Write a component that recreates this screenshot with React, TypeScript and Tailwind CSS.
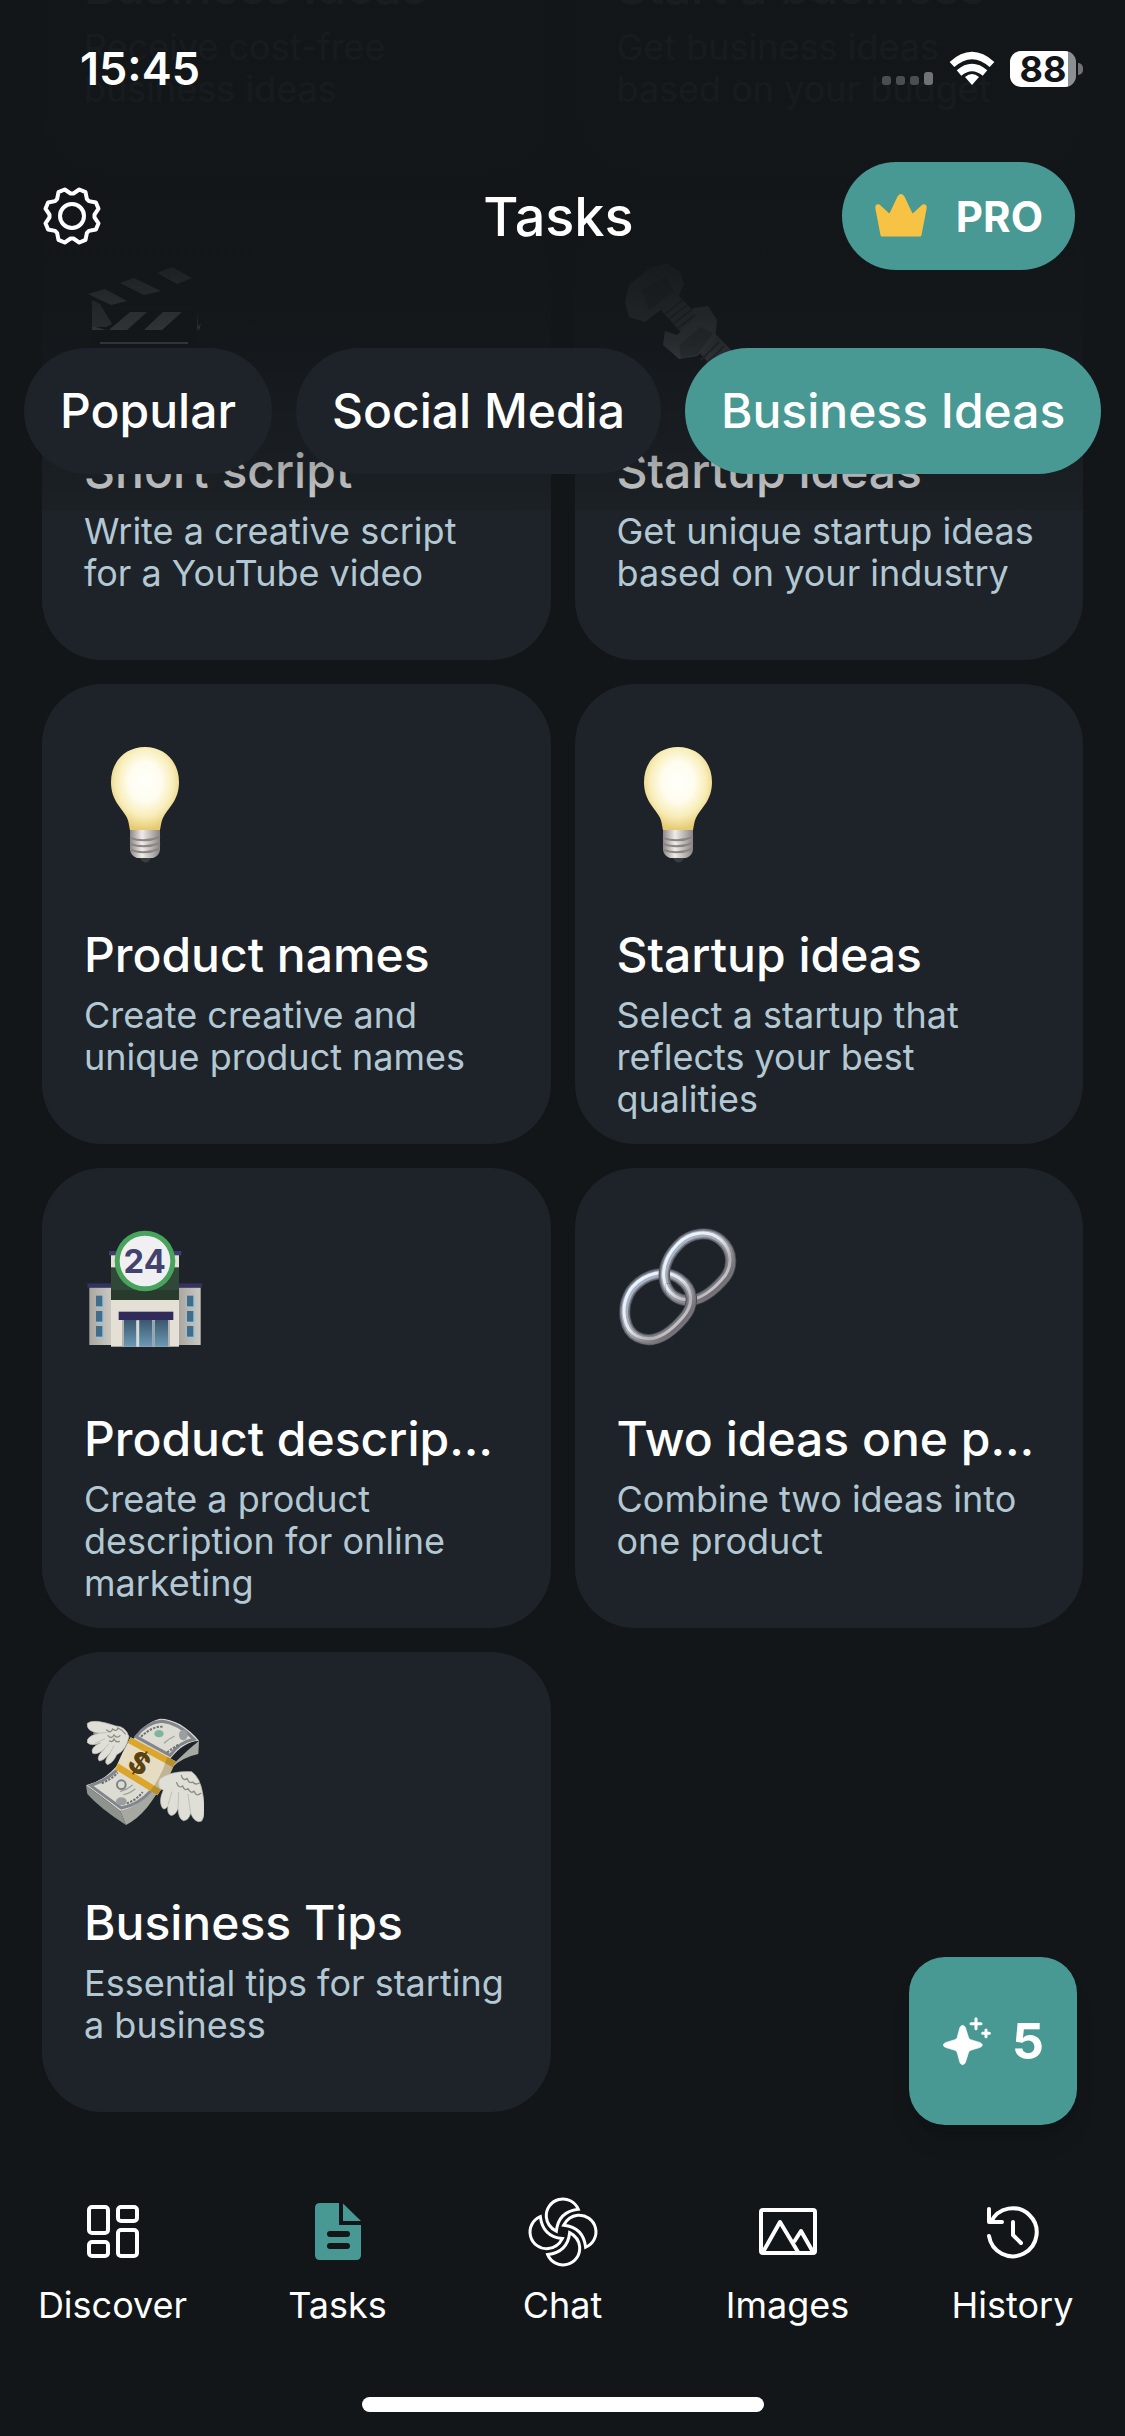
import { useState, type ReactNode } from "react";

interface Task {
  id: number;
  title: string;
  description: string;
  icon?: ReactNode;
}

interface NavItem {
  label: string;
  icon: ReactNode;
}

const emojiClass = "size-[120px] shrink-0";

function BulbIcon() {
  return (
    <svg viewBox="0 0 120 120" className={emojiClass} aria-hidden="true">
      <defs>
        <radialGradient id="glass" cx="0.5" cy="0.42" r="0.58">
          <stop offset="0" stopColor="#fffffb" />
          <stop offset="0.4" stopColor="#fffdf0" />
          <stop offset="0.72" stopColor="#f8edb8" />
          <stop offset="1" stopColor="#e6ca72" />
        </radialGradient>
        <linearGradient id="screw" x1="0" x2="1">
          <stop offset="0" stopColor="#8d8885" />
          <stop offset="0.4" stopColor="#efebe8" />
          <stop offset="1" stopColor="#8a8583" />
        </linearGradient>
      </defs>
      <path d="M54 112h15l-4 5q-3 3-7 0z" fill="#3a3d40" />
      <path d="M46 84h30v22q-1 6-7 8H53q-6-2-7-8z" fill="url(#screw)" />
      <path d="M46 94q15 5 30-1M46 100q15 5 30-1M47 106q14 5 28-1" fill="none" stroke="#8b8683" strokeWidth="2" />
      <path
        d="M61 3c20 0 34 15 34 35 0 18-10 25-15 34-3 5-3 10-4 14H46c-1-4-1-9-4-14-5-9-15-16-15-34C27 18 41 3 61 3z"
        fill="url(#glass)"
      />
    </svg>
  );
}

function StoreIcon() {
  return (
    <svg viewBox="72 84 360 360" className={emojiClass} aria-hidden="true">
      <defs>
        <linearGradient id="wall" x1="0" x2="1">
          <stop offset="0" stopColor="#aaa7a0" />
          <stop offset="1" stopColor="#cbc8c1" />
        </linearGradient>
        <linearGradient id="door" x1="0" y1="0" x2="0" y2="1">
          <stop offset="0" stopColor="#38566c" />
          <stop offset="1" stopColor="#6d9ab5" />
        </linearGradient>
      </defs>
      <rect x="88" y="262" width="66" height="173" fill="url(#wall)" />
      <rect x="356" y="262" width="66" height="173" fill="url(#wall)" />
      <rect x="82" y="250" width="72" height="13" fill="#34325f" />
      <rect x="356" y="250" width="70" height="13" fill="#34325f" />
      <rect x="153" y="165" width="204" height="275" fill="#e4e0d6" />
      <rect x="147" y="153" width="217" height="13" fill="#3e3d70" />
      <rect x="153" y="202" width="204" height="98" fill="#2f4838" />
      <rect x="153" y="270" width="204" height="30" fill="#293b2d" />
      {[287, 333, 378].map((y) => (
        <g key={y}>
          <rect x="108" y={y} width="24" height="37" fill="#9dc4d6" />
          <rect x="108" y={y} width="19" height="32" fill="#416d8b" />
          <rect x="379" y={y} width="26" height="37" fill="#9dc4d6" />
          <rect x="381" y={y} width="19" height="32" fill="#416d8b" />
        </g>
      ))}
      <rect x="186" y="358" width="144" height="82" fill="#b3b2ac" />
      <rect x="192" y="358" width="37" height="82" fill="url(#door)" />
      <rect x="238" y="358" width="38" height="82" fill="url(#door)" />
      <rect x="285" y="358" width="39" height="82" fill="url(#door)" />
      <rect x="229" y="362" width="8" height="78" fill="#d3dade" />
      <rect x="277" y="362" width="7" height="78" fill="#8fa5b2" />
      <rect x="176" y="335" width="164" height="25" fill="#302b5a" />
      <circle cx="255" cy="183" r="91" fill="#48a35c" />
      <circle cx="255" cy="183" r="76" fill="#f0eff2" />
      <text
        x="254"
        y="219"
        textAnchor="middle"
        fill="#41426e"
        fontSize="98"
        fontWeight="700"
        fontFamily="Inter, sans-serif"
      >
        24
      </text>
    </svg>
  );
}

// One chain link, shaded with stacked strokes from dark rim to highlight
function Link({ d }: { d: string }) {
  return (
    <g fill="none">
      <path d={d} stroke="#45474e" strokeWidth="34" />
      <path d={d} stroke="#74767e" strokeWidth="29" />
      <path d={d} stroke="url(#metal)" strokeWidth="20" />
      <path d={d} stroke="url(#shine)" strokeWidth="9" transform="translate(-2 -3)" />
    </g>
  );
}

function ChainIcon() {
  const upper =
    "M265 135C300 98 358 90 393 121C430 153 432 206 397 242C360 283 306 322 255 290C215 263 216 210 238 170Q248 152 265 135Z";
  const lower =
    "M130 263C168 221 226 208 268 236C312 266 315 315 281 354C246 395 194 437 142 411C100 389 96 326 116 285Q121 273 130 263Z";
  return (
    <svg viewBox="81 84 360 360" className={emojiClass} aria-hidden="true">
      <defs>
        <linearGradient id="metal" x1="0" y1="0" x2="1" y2="1">
          <stop offset="0" stopColor="#a9bede" />
          <stop offset="0.5" stopColor="#a2a5ac" />
          <stop offset="0.8" stopColor="#766d70" />
          <stop offset="1" stopColor="#8e99a8" />
        </linearGradient>
        <linearGradient id="shine" x1="0" y1="0" x2="1" y2="1">
          <stop offset="0" stopColor="#f2f8ff" />
          <stop offset="0.45" stopColor="#e6ebf2" />
          <stop offset="0.7" stopColor="#b0b0b5" />
          <stop offset="1" stopColor="#e8eff8" />
        </linearGradient>
        <clipPath id="overlap">
          <path d="M195 180h52v70h-20v40h-32z" />
        </clipPath>
      </defs>
      <Link d={upper} />
      <Link d={lower} />
      <g clipPath="url(#overlap)">
        <Link d={upper} />
      </g>
    </svg>
  );
}

function MoneyIcon() {
  return (
    <svg viewBox="72 66 360 360" className={emojiClass} aria-hidden="true">
      <path d="M78 286L181 363 198 405Q120 355 82 312z" fill="#8f938e" />
      <path d="M181 363Q235 345 300 270Q345 210 417 152L415 192Q365 202 332 236C290 320 250 380 198 405z" fill="#a5a9a2" />
      <path
        d="M78 286Q140 270 180 215C215 150 245 100 300 86Q330 86 360 103Q395 125 417 152Q370 155 332 205C290 270 260 345 181 363Q125 320 78 286z"
        fill="#d7d8d1"
      />
      <path
        d="M92 287Q145 270 178 232L275 300Q235 345 184 354Q130 315 92 287zM228 140Q260 98 303 94Q355 98 402 148Q360 155 330 196z"
        fill="#dcdcd2"
        stroke="#82858c"
        strokeWidth="9"
      />
      <path d="M243 140q35-32 65-30M355 165q-20 10-35 24M125 280q30-12 48-32M200 340q30-10 48-34" stroke="#6d7076" strokeWidth="6" strokeDasharray="7 4" fill="none" />
      <ellipse cx="297" cy="131" rx="14" ry="11" fill="#80b49d" />
      <path d="M312 160q15-14 32-22M180 305q22-6 38-20M190 314q20-4 36-18" stroke="#a0a39f" strokeWidth="4" fill="none" />
      <circle cx="184" cy="284" r="13" fill="none" stroke="#7d8184" strokeWidth="6" />
      <ellipse cx="184" cy="334" rx="16" ry="12" fill="#9b9ea1" />
      <ellipse cx="370" cy="135" rx="13" ry="16" fill="#9b9ea1" />
      <path d="M212 142L347 214Q325 270 292 316L165 238Q185 190 212 142z" fill="#e6dcc2" />
      <path d="M212 142L347 214 338 232 203 158zM174 220L303 299 292 316 165 238z" fill="#dba62b" />
      <path d="M347 214Q325 270 292 316l-22-13Q305 260 322 200z" fill="#6b5a2a" opacity="0.3" />
      <text
        x="0"
        y="31"
        textAnchor="middle"
        fill="#5b420f"
        fontSize="88"
        fontWeight="800"
        fontFamily="Inter, sans-serif"
        transform="translate(238 219) rotate(32)"
      >
        $
      </text>
      <g fill="#e0dfd7" stroke="#bdbcb3" strokeWidth="2">
        <path d="M207 140Q196 108 168 108Q100 84 82 100Q78 125 118 130Q78 138 82 158Q95 170 122 158Q90 172 98 190Q112 196 134 176Q106 202 118 213Q132 212 150 189Q128 218 143 224Q160 218 170 194Q198 182 207 140z" />
        <path d="M298 268Q330 242 395 245Q420 262 428 310Q440 372 425 393Q405 402 392 370Q386 392 370 392Q355 386 354 356Q345 378 332 376Q320 370 324 348Q312 365 305 350Q296 330 310 300Q290 296 298 268z" />
      </g>
      <g fill="none" stroke="#8b8b84" strokeWidth="4" strokeLinecap="round">
        <path d="M140 120q12 12 18-3q12 10 16-3q14 6 22 18M144 137q10 12 18-2q10 12 18 2M148 153q10 5 14-6q6 12 16 7" />
        <path d="M364 256q4 18 18 10q4 16 16 10q8 10 20 3M350 278q6 18 18 10q6 16 16 8q8 16 18 8q8 18 20 6" />
      </g>
      <g fill="none" stroke="#c2c1b7" strokeWidth="3">
        <path d="M100 130l40-2M105 160l30-14M125 185l22-24M147 195l15-28M324 345l12-40M354 356l2-50M392 370l-8-58" />
      </g>
    </svg>
  );
}

function ClapperIcon() {
  return (
    <svg viewBox="0 0 120 120" className={emojiClass} aria-hidden="true">
      <path d="M4 33L88 7 108 18 26 46z" fill="#1e2022" />
      <path d="M8 50h104v64H8z" fill="#1a1c1e" />
      <g fill="#f2f2f2">
        <path d="M4 34l17-5 22 12-16 4zM36 23l14-5 27 13-17 4zM73 13l15-6 20 11-15 6z" />
        <path d="M46 52h17L43 70H25zM79 52h19L78 70H60zM113 52l1 18h-1zM8 66l14 4H8zM117 63l-5 7h3z" />
      </g>
      <path d="M8 40l8 4 12 20-6 3H8z" fill="#b9b9b9" />
      <path d="M16 83h88" stroke="#ddd" strokeWidth="2" />
    </svg>
  );
}

function BoltIcon() {
  return (
    <svg viewBox="0 0 120 120" className={emojiClass} aria-hidden="true">
      <path d="M44 50L62 36 118 94 100 112z" fill="#8a8f94" />
      <path d="M8 42L12 25 34 7 50 3 63 12 67 24 60 40 38 54 28 62 12 57z" fill="#85898d" />
      <path d="M24 30L50 17 57 32 32 50z" fill="#5d6166" />
      <path d="M76 48l15-2 9 14-2 19-18 17-18 3-16-14 2-14 12 4 15-14z" fill="#9da2a7" />
      <path d="M62 86l21-19 13 6-16 22-16 3z" fill="#74777b" />
      <g stroke="#4f5459" strokeWidth="2">
        <path d="M48 54l18-14M52 59l18-14M56 64l18-14M60 69l18-14M84 100l18-18M89 104l18-18M94 109l18-18" />
      </g>
    </svg>
  );
}

function GearIcon() {
  // Four points for each of the eight teeth
  const points = Array.from({ length: 8 }, (_, i) => i * 45 + 22.5)
    .flatMap((angle) => [
      [angle - 19, 22.5],
      [angle - 7, 27.5],
      [angle + 7, 27.5],
      [angle + 19, 22.5],
    ])
    .map(([angle, r]) => {
      const rad = (angle * Math.PI) / 180;
      return `${(30 + r * Math.cos(rad)).toFixed(1)},${(30 + r * Math.sin(rad)).toFixed(1)}`;
    })
    .join(" ");
  return (
    <svg viewBox="0 0 60 60" className="size-[60px]" fill="none" stroke="currentColor" strokeWidth="4" strokeLinejoin="round" aria-hidden="true">
      <polygon points={points} />
      <circle cx="30" cy="30" r="12" />
    </svg>
  );
}

function CrownIcon() {
  return (
    <svg viewBox="0 0 54 44" className="h-[44px] w-[54px]" aria-hidden="true">
      <path
        d="M8 41L3 15Q2 11 5 12L16 22 25 3Q27 0 29 3L38 22 49 12Q52 11 51 15L46 41z"
        fill="#f6c344"
        stroke="#f6c344"
        strokeWidth="3"
        strokeLinejoin="round"
      />
    </svg>
  );
}

function SparkleIcon() {
  return (
    <svg viewBox="250 286 150 150" className="size-[50px]" fill="white" stroke="white" strokeLinecap="round" strokeLinejoin="round" aria-hidden="true">
      <path
        d="M304 320Q312 308 320 320L330 352Q332 355 336 357L365 366Q377 373 365 380L336 389Q332 391 330 394L320 426Q312 438 304 426L295 394Q293 391 289 389L260 380Q248 373 260 366L289 357Q293 355 295 352z"
        strokeWidth="2"
      />
      <path d="M352 294v30M337 309h30M382 328v20M372 338h20" strokeWidth="9" />
    </svg>
  );
}

function StatusIcons() {
  return (
    <div className="flex items-center gap-[15px]">
      <svg viewBox="0 0 52 36" className="h-9 w-[52px]" aria-hidden="true">
        <g fill="#4b4e51">
          <rect x="0" y="25" width="9" height="9" rx="3" />
          <rect x="14" y="25" width="9" height="9" rx="3" />
          <rect x="28" y="25" width="9" height="9" rx="3" />
        </g>
        <rect x="42" y="21" width="9" height="13" rx="3" fill="#707274" />
      </svg>
      <svg viewBox="0 0 46 36" className="h-9 w-[46px]" fill="none" stroke="white" strokeWidth="7" aria-hidden="true">
        <path d="M3 13.500Q23-4.500 43 13.500" />
        <path d="M10 22Q23 11 36 22" />
        <path d="M23 34l-7-8q7-6 14 0z" fill="white" stroke="none" />
      </svg>
      <div className="flex items-center gap-[2px]">
        <div className="flex h-9 w-[66px] items-center justify-center rounded-[11px] bg-gradient-to-r from-white from-88% to-[#8d9092] to-88% text-[36px] font-bold leading-9 text-[#121619]">
          88
        </div>
        <div className="h-3 w-[5px] rounded-r-full bg-[#707274]" />
      </div>
    </div>
  );
}

const tasks: Task[] = [
  { id: 1, title: "Business ideas", description: "Receive cost-free business ideas" },
  { id: 2, title: "Start a business", description: "Get business ideas based on your budget" },
  { id: 3, title: "Short script", description: "Write a creative script for a YouTube video", icon: <ClapperIcon /> },
  { id: 4, title: "Startup ideas", description: "Get unique startup ideas based on your industry", icon: <BoltIcon /> },
  { id: 5, title: "Product names", description: "Create creative and unique product names", icon: <BulbIcon /> },
  { id: 6, title: "Startup ideas", description: "Select a startup that reflects your best qualities", icon: <BulbIcon /> },
  { id: 7, title: "Product description", description: "Create a product description for online marketing", icon: <StoreIcon /> },
  { id: 8, title: "Two ideas one product", description: "Combine two ideas into one product", icon: <ChainIcon /> },
  { id: 9, title: "Business Tips", description: "Essential tips for starting a business", icon: <MoneyIcon /> },
];

const navItems: NavItem[] = [
  {
    label: "Discover",
    icon: (
      <g fill="none" stroke="currentColor" strokeWidth="4">
        <rect x="12" y="11" width="19" height="26" rx="3" />
        <rect x="12" y="46" width="19" height="14" rx="3" />
        <rect x="41" y="11" width="19" height="14" rx="3" />
        <rect x="41" y="34" width="19" height="26" rx="3" />
      </g>
    ),
  },
  {
    label: "Tasks",
    icon: (
      <g fill="#489894">
        <path d="M18 7h19v22h22v30q0 5-5 5H18q-5 0-5-5V12q0-5 5-5z" />
        <path d="M41 7.500L59 25H41z" />
        <path d="M28 38h17M28 50h17" stroke="#121619" strokeWidth="6" strokeLinecap="round" />
      </g>
    ),
  },
  {
    label: "Chat",
    icon: (
      <g transform="translate(-11.300 -10.700) scale(0.333)" fill="none" stroke="currentColor" strokeWidth="9">
        {[0, 90, 180, 270].map((angle) => (
          <path
            key={angle}
            d="M188 72A50 50 0 0 0 92 96Q95 124 122 138Q128 79 188 72Z"
            transform={`rotate(${angle} 142 140)`}
          />
        ))}
      </g>
    ),
  },
  {
    label: "Images",
    icon: (
      <g fill="none" stroke="currentColor" strokeWidth="4" strokeLinejoin="round">
        <rect x="9" y="14" width="54" height="43" rx="2" />
        <path d="M11 56L28 26 46 56M42 46L49 35 61 56" />
      </g>
    ),
  },
  {
    label: "History",
    icon: (
      <g fill="none" stroke="currentColor" strokeWidth="4" strokeLinecap="round" strokeLinejoin="round">
        <path d="M12 40A24 24 0 1 0 14 26" />
        <path d="M12 13v13h13M36 26v13l8 8" />
      </g>
    ),
  },
];

const categories = ["Popular", "Social Media", "Business Ideas"];

function TaskCard({ task }: { task: Task }) {
  return (
    <article className="flex min-h-[460px] min-w-0 flex-col rounded-[60px] bg-[#1e2329] px-[42px] pt-15">
      {task.icon ?? <div className={emojiClass} />}
      <h2 className="mt-16 truncate text-[48px] font-medium leading-[54px] text-white">
        {task.title}
      </h2>
      <p className="mt-3 text-[36px] leading-[42px] text-[#b3c8d3]">
        {task.description}
      </p>
    </article>
  );
}

export default function App() {
  const [category, setCategory] = useState("Business Ideas");

  return (
    <div className="relative flex h-screen flex-col overflow-hidden bg-[#121619] font-[Inter,sans-serif] text-white">
      {/* Task list, scrolled to its end */}
      <main className="relative flex min-h-0 flex-1 flex-col justify-end pb-6">
        <div className="grid grid-cols-2 gap-6 px-[42px]">
          {tasks.map((task) => (
            <TaskCard key={task.id} task={task} />
          ))}
        </div>
        <button className="absolute bottom-[11px] right-12 flex size-[168px] items-center justify-center gap-5 rounded-[36px] bg-[#489894] text-[50px] font-bold shadow-xl">
          <SparkleIcon />5
        </button>
      </main>

      {/* Header that the list fades out under */}
      <header className="absolute inset-x-0 top-0 bg-linear-to-b from-[#121619]/97 from-50% via-[#121619]/85 via-67% to-[#121619]/20 pb-9">
        <div className="flex h-[138px] items-center justify-between pl-20 pr-[42px]">
          <span className="text-[45px] font-semibold">15:45</span>
          <StatusIcons />
        </div>
        <div className="mt-6 grid grid-cols-3 items-center pl-[42px] pr-[50px]">
          <button aria-label="Settings" className="w-fit">
            <GearIcon />
          </button>
          <h1 className="text-center text-[54px] font-medium">Tasks</h1>
          <button className="flex h-[108px] items-center gap-7 justify-self-end rounded-full bg-[#489894] px-8 text-[42px] font-bold">
            <CrownIcon />
            PRO
          </button>
        </div>
        <div className="mt-[78px] flex gap-6 whitespace-nowrap px-6">
          {categories.map((name) => (
            <button
              key={name}
              onClick={() => setCategory(name)}
              className={`h-[126px] rounded-full px-9 text-[48px] font-medium ${
                category === name ? "bg-[#489894]" : "bg-[#1e2329]"
              }`}
            >
              {name}
            </button>
          ))}
        </div>
      </header>

      <footer className="flex flex-col items-center bg-[#121619] pb-6 pt-15">
        <nav className="grid w-full grid-cols-5">
          {navItems.map((item) => (
            <a key={item.label} href="#" className="flex flex-col items-center gap-4 text-[36px] leading-[42px]">
              <svg viewBox="0 0 72 72" className="size-18 overflow-visible" aria-hidden="true">
                {item.icon}
              </svg>
              {item.label}
            </a>
          ))}
        </nav>
        <div className="mt-[71px] h-[15px] w-[402px] rounded-full bg-white" />
      </footer>
    </div>
  );
}
